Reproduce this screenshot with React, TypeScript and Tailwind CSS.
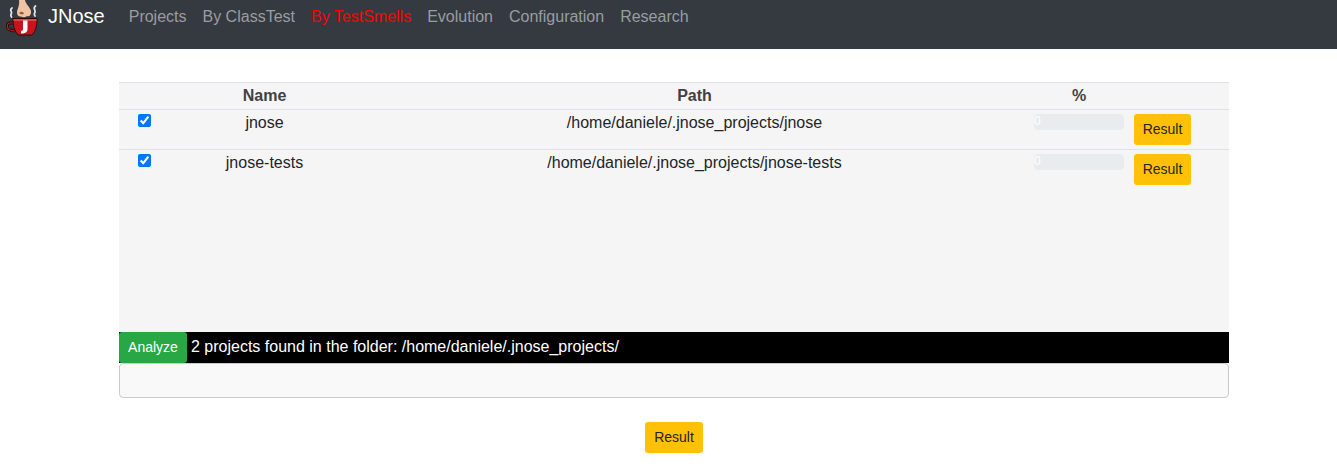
import React from 'react';

const projects = [
  { name: 'jnose', path: '/home/daniele/.jnose_projects/jnose' },
  { name: 'jnose-tests', path: '/home/daniele/.jnose_projects/jnose-tests' },
];

const navLinks = ['Projects', 'By ClassTest', 'By TestSmells', 'Evolution', 'Configuration', 'Research'];

const Logo = () => (
  <svg width="32" height="37" viewBox="0 0 32 37" className="shrink-0">
    {/* steam */}
    <path d="M6 8c-3 2 0 3-.5 5s-1.500 2 0 4" fill="none" stroke="#e4e4e4" strokeWidth="1.800" strokeLinecap="round" />
    <path d="M29.500 6c-3 2 0 4-.5 6s-1.500 2 0 4" fill="none" stroke="#e4e4e4" strokeWidth="1.800" strokeLinecap="round" />
    {/* nose */}
    <path d="M13 0h6c.5 4 5 7 6 11 .5 4-2 6-4 5-2 1.500-4 1.500-6 .5-2 .5-4-1-4-4 0-3 3-7 2-12.500z" fill="#f2c3a0" />
    <path d="M13 13c2-2 4-1.500 5 .5-1.500 1.500-3.500 1-5-.5z" fill="#8f6048" />
    {/* mug */}
    <path d="M8 23H4c-3.500 0-3.500 6 0 7l5 1" fill="none" stroke="#1c0f10" strokeWidth="3" />
    <path d="M8 23H4c-3.500 0-3.500 6 0 7l5 1" fill="none" stroke="#c3161c" strokeWidth="1.200" />
    <path d="M7 18.500h24c0 7-1 12-5 16.500H12c-4-4.500-5-9.500-5-16.500z" fill="#c9141d" stroke="#2a0c0e" strokeWidth="1" />
    <path d="M7.500 19h23v2h-23z" fill="#e8404a" />
    <path d="M17 20.500h4.500V29c0 3-2 4.500-6.500 4.500V31c1.500 0 2-1 2-2z" fill="#fff" />
  </svg>
);

const ResultButton = () => (
  <button className="h-[31px] w-[57px] rounded-[3.2px] bg-[#ffc107] text-center text-[14px] leading-[21px] text-[#212529]">
    Result
  </button>
);

const App: React.FC = () => {
  return (
    <div className="min-h-[464px] bg-white font-['Liberation_Sans',Arial,sans-serif] text-[16px] leading-6 text-[#212529]">
      {/* Navbar */}
      <nav className="flex h-[49px] items-start bg-[#343a40]">
        <div className="ml-[6px] flex items-start">
          <Logo />
          <span className="ml-[10px] mt-[1px] text-[20px] leading-[30px] text-white">JNose</span>
        </div>
        <ul className="ml-[16px] mt-[5px] flex">
          {navLinks.map((link) => (
            <li
              key={link}
              className={`px-2 ${link === 'By TestSmells' ? 'text-[#ff0000]' : 'text-[#9a9da0]'}`}
            >
              {link}
            </li>
          ))}
        </ul>
      </nav>

      <main className="ml-[119px] w-[1110px] pt-[33px]">
        {/* Projects table */}
        <div className="h-[250px] border-t border-[#dee2e6] bg-[#f5f5f5]">
          <div className="grid h-[27px] grid-cols-[51px_189px_670px_100px_100px] border-b border-[#dee2e6] text-center font-bold leading-[25px] text-[#3f4144]">
            <div />
            <div>Name</div>
            <div className="pl-px">Path</div>
            <div>%</div>
            <div />
          </div>
          {projects.map((p, i) => (
            <div
              key={p.name}
              className={`grid h-[40px] grid-cols-[51px_189px_670px_100px_100px] text-center ${
                i === 0 ? 'border-b border-[#dee2e6]' : ''
              }`}
            >
              <div className="flex justify-center pt-[4px]">
                <input type="checkbox" defaultChecked className="m-0 h-[13px] w-[13px]" />
              </div>
              <div className="pt-px">{p.name}</div>
              <div className="pl-px pt-px">{p.path}</div>
              <div className="px-[5px] pt-[4px]">
                <div className="h-4 rounded bg-[#e9ecef] text-left text-[12px] leading-[15px] text-white">
                  0
                </div>
              </div>
              <div className="px-[5px] pt-[4px] text-left">
                <ResultButton />
              </div>
            </div>
          ))}
        </div>

        {/* Status bar */}
        <div className="flex h-[31px] items-start bg-black text-white">
          <button className="h-[31px] w-[68px] rounded-[3.2px] bg-[#28a745] text-center text-[14px] leading-[21px] text-white">
            Analyze
          </button>
          <span className="ml-[4px] mt-[3px]">2 projects found in the folder: /home/daniele/.jnose_projects/</span>
        </div>
        <div className="h-[35px] rounded border border-[#cccccc] bg-[#f9f9f9]" />

        <div className="flex justify-center pt-[24px]">
          <button className="h-[31px] w-[58px] rounded-[3.2px] bg-[#ffc107] text-center text-[14px] leading-[21px] text-[#212529]">
            Result
          </button>
        </div>
      </main>
    </div>
  );
};

export default App;
